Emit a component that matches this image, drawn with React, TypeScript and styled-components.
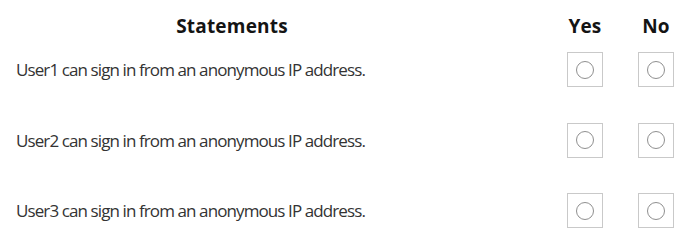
import React from 'react'
import styled, { createGlobalStyle } from 'styled-components'

const GlobalStyle = createGlobalStyle`
	html, body {
		margin: 0;
		padding: 0;
		background: #ffffff;
	}
	body {
		font-family: 'Open Sans', 'DejaVu Sans', sans-serif;
		color: #333333;
	}
`

const statements = [
	'User1 can sign in from an anonymous IP address.',
	'User2 can sign in from an anonymous IP address.',
	'User3 can sign in from an anonymous IP address.',
]

export default function App() {
	return (
		<>
			<GlobalStyle />
			<Table>
				<HeaderRow>
					<StatementHeader>Statements</StatementHeader>
					<ChoiceHeader>Yes</ChoiceHeader>
					<ChoiceHeader>No</ChoiceHeader>
				</HeaderRow>
				{statements.map((text) => (
					<Row key={text}>
						<Statement>{text}</Statement>
						<RadioBox>
							<Circle />
						</RadioBox>
						<RadioBox>
							<Circle />
						</RadioBox>
					</Row>
				))}
			</Table>
		</>
	)
}

const Table = styled.div`
	width: 683px;
	height: 242px;
	padding-top: 13px;
	box-sizing: border-box;
	display: flex;
	flex-direction: column;
	gap: 35.5px;
`

const HeaderRow = styled.div`
	display: grid;
	grid-template-columns: 532px 36px 36px;
	column-gap: 35px;
	align-items: center;
	height: 26px;
	margin-bottom: -22.5px;
`

const StatementHeader = styled.div`
	width: 464px;
	text-align: center;
	font-weight: 700;
	font-size: 19px;
	letter-spacing: 0.2px;
	color: #141414;
`

const ChoiceHeader = styled.div`
	text-align: center;
	font-weight: 700;
	font-size: 19px;
	letter-spacing: 0.1px;
	color: #141414;
	white-space: nowrap;
`

const Row = styled.div`
	display: grid;
	grid-template-columns: 532px 36px 36px;
	column-gap: 35px;
	align-items: center;
	height: 35px;
`

const Statement = styled.div`
	padding-left: 16px;
	font-size: 17px;
	letter-spacing: -0.9px;
	white-space: nowrap;
	color: #333333;
`

const RadioBox = styled.div`
	width: 36px;
	height: 35px;
	box-sizing: border-box;
	border: 1px solid #c9c9c9;
	display: flex;
	align-items: center;
	justify-content: center;
`

const Circle = styled.div`
	width: 18px;
	height: 18px;
	box-sizing: border-box;
	border: 1.6px solid #8f8f8f;
	border-radius: 50%;
`
